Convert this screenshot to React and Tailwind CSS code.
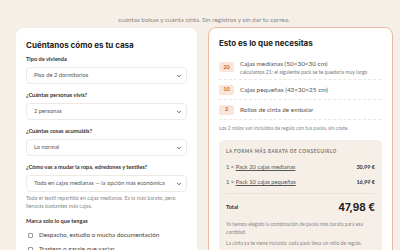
import { ChevronDown } from 'lucide-react';

const heading = { fontFamily: 'Inter, "Noto Sans", sans-serif' };

const Select = ({ value }) => (
  <div className="mt-[4px] h-[17px] rounded-[4px] border border-[#efe9e3] bg-white flex items-center justify-between pl-[7px] pr-[4px]">
    <span className="text-[5.8px] text-[#555]">{value}</span>
    <ChevronDown size={6} strokeWidth={3.5} className="text-[#444]" />
  </div>
);

const Field = ({ label, value, first }) => (
  <div className={first ? 'mt-[5px]' : 'mt-[7px]'}>
    <div className="text-[5.6px] leading-[8px] font-bold text-[#333]">{label}</div>
    <Select value={value} />
  </div>
);

const Check = ({ label }) => (
  <div className="flex items-center gap-[6px] h-[14px] pl-[2px]">
    <span className="w-[5px] h-[5px] rounded-[1px] border border-[#999] bg-white" />
    <span className="text-[6.3px] text-[#444]">{label}</span>
  </div>
);

const Item = ({ n, title, sub, tall }) => (
  <div className={`flex items-center gap-[6px] border-b border-dashed border-[#ece6e0] ${tall ? 'h-[25px]' : 'h-[20px]'}`}>
    <span className="w-[15px] h-[10px] rounded-[2px] bg-[#fbe5da] text-[#c8613b] text-[5.5px] font-bold flex items-center justify-center">{n}</span>
    <div className="flex flex-col">
      <span className="text-[6.4px] leading-[9px] text-[#555]">{title}</span>
      {sub && <span className="text-[5.1px] leading-[8px] text-[#777]">{sub}</span>}
    </div>
  </div>
);

const Line = ({ name, price }) => (
  <div className="flex items-center justify-between h-[15px]">
    <span className="text-[5.8px] text-[#555]">
      1 × <span className="underline underline-offset-[1px]">{name}</span>
    </span>
    <span className="text-[5.5px] font-bold text-[#333]">{price}</span>
  </div>
);

export default function App() {
  return (
    <div className="w-[400px] h-[250px] overflow-hidden bg-[#f6efe8]" style={{ fontFamily: 'Lato, "Open Sans", sans-serif' }}>
      <div className="h-[27px] pt-[4px] text-center">
        <span className="text-[6.4px] leading-[8px] text-[#8a8580] pl-[8px]">
          cuántas bolsas y cuánta cinta. Sin registros y sin dar tu correo.
        </span>
      </div>
      <div className="flex gap-[11px] pl-[16px]">
        <div className="mt-[1px] w-[181px] h-[240px] bg-white rounded-[8px] px-[10px] pt-[12px]">
          <h2 className="text-[8px] leading-[10px] font-bold text-[#222]" style={heading}>Cuéntanos cómo es tu casa</h2>
          <Field first label="Tipo de vivienda" value="Piso de 2 dormitorios" />
          <Field label="¿Cuántas personas vivís?" value="2 personas" />
          <Field label="¿Cuántas cosas acumuláis?" value="Lo normal" />
          <Field label="¿Cómo vas a mudar la ropa, edredones y textiles?" value="Todo en cajas medianas — la opción más económica" />
          <p className="mt-[2px] text-[5.3px] leading-[8px] text-[#888]">
            Todo el textil repartido en cajas medianas. Es lo más barato, pero<br />llenarás bastantes más cajas.
          </p>
          <div className="mt-[7px] text-[5.6px] leading-[8px] font-bold text-[#333]">Marca solo lo que tengas</div>
          <div className="mt-[3px]">
            <Check label="Despacho, estudio o mucha documentación" />
            <Check label="Trastero o garaje que vaciar" />
          </div>
        </div>
        <div className="w-[185px] h-[240px] bg-white rounded-[8px] border-[1.5px] border-[#eab9a2] px-[10px] pt-[10px]">
          <h2 className="text-[8px] leading-[10px] font-bold text-[#222]" style={heading}>Esto es lo que necesitas</h2>
          <div className="mt-[7px] pr-[1px]">
            <Item tall n="20" title="Cajas medianas (50×30×30 cm)" sub="calculamos 21: el siguiente pack se te quedaría muy largo" />
            <Item n="10" title="Cajas pequeñas (43×30×25 cm)" />
            <Item n="2" title="Rollos de cinta de embalar" />
          </div>
          <p className="mt-[4px] text-[5px] leading-[8px] text-[#888]">Los 2 rollos van incluidos de regalo con tus packs, sin coste.</p>
          <div className="mt-[8px] bg-[#f6efe8] rounded-[5px] px-[7px] pt-[7px] pb-[6px]">
            <div className="text-[4.6px] leading-[8px] font-bold tracking-[0.5px] text-[#777]">LA FORMA MÁS BARATA DE CONSEGUIRLO</div>
            <div className="mt-[5px] border-b border-[#ebe3db] pb-[3px]">
              <Line name="Pack 20 cajas medianas" price="30,99 €" />
              <Line name="Pack 10 cajas pequeñas" price="16,99 €" />
            </div>
            <div className="flex items-center justify-between h-[26px]">
              <span className="text-[5.6px] font-bold text-[#333]">Total</span>
              <span className="text-[10px] font-bold text-[#222]" style={heading}>47,98 €</span>
            </div>
            <p className="text-[5px] leading-[8px] text-[#888]">Ya hemos elegido la combinación de packs más barata para esa<br />cantidad.</p>
            <p className="mt-[3px] text-[5px] leading-[8px] text-[#888]">La cinta ya te viene incluida: cada pack lleva un rollo de regalo.</p>
          </div>
        </div>
      </div>
    </div>
  );
}
